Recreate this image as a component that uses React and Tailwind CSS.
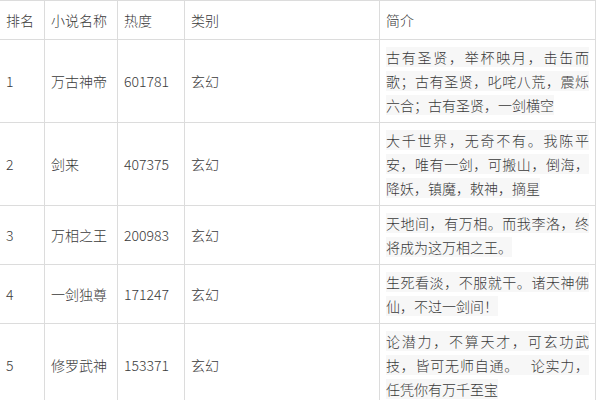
const rows = [
  { rank: "1", name: "万古神帝", heat: "601781", cat: "玄幻", intro: "古有圣贤，举杯映月，击缶而歌；古有圣贤，叱咤八荒，震烁六合；古有圣贤，一剑横空" },
  { rank: "2", name: "剑来", heat: "407375", cat: "玄幻", intro: "大千世界，无奇不有。我陈平安，唯有一剑，可搬山，倒海，降妖，镇魔，敕神，摘星" },
  { rank: "3", name: "万相之王", heat: "200983", cat: "玄幻", intro: "天地间，有万相。而我李洛，终将成为这万相之王。" },
  { rank: "4", name: "一剑独尊", heat: "171247", cat: "玄幻", intro: "生死看淡，不服就干。诸天神佛仙，不过一剑间！" },
  { rank: "5", name: "修罗武神", heat: "153371", cat: "玄幻", intro: "论潜力，不算天才，可玄功武技，皆可无师自通。\u00a0\u00a0 论实力，任凭你有万千至宝" },
];

function Cell({ children, top, last }) {
  return (
    <div
      className={
        "flex items-center px-[6px] border-b border-[#dcdcdc] " +
        (last ? "" : "border-r ") +
        (top ? "border-t py-[7px]" : "py-[5px]")
      }
    >
      {children}
    </div>
  );
}

export default function App() {
  return (
    <div className="w-[600px] h-[400px] overflow-hidden bg-white font-['Noto_Sans_CJK_SC',sans-serif] font-light text-[14px] leading-[24px] text-[#3a3a3a]">
      <div className="grid grid-cols-[45px_73px_67px_195px_216px] w-[596px]">
        <Cell top>排名</Cell>
        <Cell top>小说名称</Cell>
        <Cell top>热度</Cell>
        <Cell top>类别</Cell>
        <div className="border-t border-b border-r border-[#dcdcdc] px-[6px] py-[7px] flex items-center">简介</div>
        {rows.map((r) => (
          <>
            <Cell key={r.rank + "a"}>{r.rank}</Cell>
            <Cell key={r.rank + "b"}>{r.name}</Cell>
            <Cell key={r.rank + "c"}>{r.heat}</Cell>
            <Cell key={r.rank + "d"}>{r.cat}</Cell>
            <div key={r.rank + "e"} className="border-b border-r border-[#dcdcdc] pl-[6px] pr-[6px] py-[5px] text-justify">
              <span className="bg-[#f7f7f7]">{r.intro}</span>
            </div>
          </>
        ))}
      </div>
    </div>
  );
}
